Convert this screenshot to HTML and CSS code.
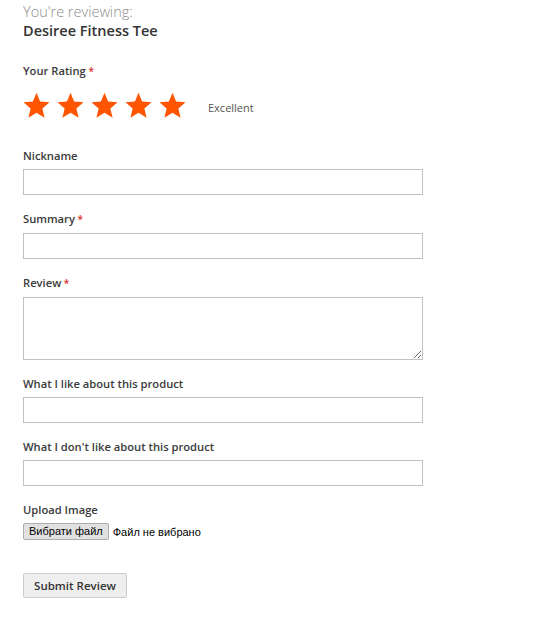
FILE: index.html
```html
<!DOCTYPE html>
<html>
<head>
<meta charset="utf-8">
<link rel="stylesheet" href="styles.css">
</head>
<body>
<form class="review-form">
  <div class="legend">
    <span class="legend-sub">You're reviewing:</span>
    <strong class="legend-name">Desiree Fitness Tee</strong>
  </div>

  <div class="field rating-field">
    <div class="label required">Your Rating</div>
    <div class="rating-row">
      <div class="stars">
        <svg class="star" viewBox="0 0 24 24"><polygon points="12,0.6 15.2,8.4 23.6,9.1 17.2,14.6 19.2,22.9 12,18.5 4.8,22.9 6.8,14.6 0.4,9.1 8.8,8.4"/></svg>
        <svg class="star" viewBox="0 0 24 24"><polygon points="12,0.6 15.2,8.4 23.6,9.1 17.2,14.6 19.2,22.9 12,18.5 4.8,22.9 6.8,14.6 0.4,9.1 8.8,8.4"/></svg>
        <svg class="star" viewBox="0 0 24 24"><polygon points="12,0.6 15.2,8.4 23.6,9.1 17.2,14.6 19.2,22.9 12,18.5 4.8,22.9 6.8,14.6 0.4,9.1 8.8,8.4"/></svg>
        <svg class="star" viewBox="0 0 24 24"><polygon points="12,0.6 15.2,8.4 23.6,9.1 17.2,14.6 19.2,22.9 12,18.5 4.8,22.9 6.8,14.6 0.4,9.1 8.8,8.4"/></svg>
        <svg class="star" viewBox="0 0 24 24"><polygon points="12,0.6 15.2,8.4 23.6,9.1 17.2,14.6 19.2,22.9 12,18.5 4.8,22.9 6.8,14.6 0.4,9.1 8.8,8.4"/></svg>
      </div>
      <span class="rating-text">Excellent</span>
    </div>
  </div>

  <div class="field">
    <label class="label">Nickname</label>
    <input class="input" type="text">
  </div>
  <div class="field">
    <label class="label required">Summary</label>
    <input class="input" type="text">
  </div>
  <div class="field">
    <label class="label required">Review</label>
    <textarea class="textarea"></textarea>
  </div>
  <div class="field">
    <label class="label">What I like about this product</label>
    <input class="input" type="text">
  </div>
  <div class="field">
    <label class="label">What I don't like about this product</label>
    <input class="input" type="text">
  </div>
  <div class="field upload-field">
    <label class="label">Upload Image</label>
    <div class="file-row">
      <span class="file-btn">Вибрати файл</span>
      <span class="file-status">Файл не вибрано</span>
    </div>
  </div>

  <div class="actions">
    <button type="button" class="submit">Submit Review</button>
  </div>
</form>
</body>
</html>
```
FILE: styles.css
```css
html, body {
  margin: 0;
  padding: 0;
  background: #fff;
}
body {
  font-family: "Open Sans", "Noto Sans", sans-serif;
  color: #333;
}
.review-form {
  padding: 3px 0 0 23px;
  width: 400px;
}
.legend {
  display: flex;
  flex-direction: column;
}
.legend-sub {
  font-weight: 300;
  font-size: 14.5px;
  line-height: 18px;
  color: #8c8c8c;
}
.legend-name {
  font-weight: 600;
  font-size: 14.5px;
  line-height: 19px;
  color: #333;
}
.label {
  display: block;
  font-weight: 600;
  font-size: 11.2px;
  line-height: 15px;
  color: #3a3a3a;
  margin-bottom: 6px;
}
.label.required::after {
  content: " *";
  color: #e02b27;
  font-size: 10px;
}
.field {
  margin-bottom: 16px;
}
.field.rating-field {
  margin-top: 23px;
  margin-bottom: 29px;
}
.rating-field .label {
  margin-bottom: 4px;
}
.rating-row {
  display: flex;
  align-items: center;
  margin-top: 13px;
}
.stars {
  display: flex;
  gap: 7px;
}
.star {
  width: 27px;
  height: 27px;
  fill: #ff5501;
  display: block;
}
.rating-text {
  margin-left: 22px;
  font-size: 11px;
  color: #555;
  line-height: 15px;
  padding-top: 3px;
}
.input {
  display: block;
  box-sizing: border-box;
  width: 400px;
  height: 26px;
  border: 1px solid #c2c2c2;
  margin: 0;
  padding: 0 8px;
  background: #fff;
}
.textarea {
  display: block;
  box-sizing: border-box;
  width: 400px;
  height: 63px;
  border: 1px solid #c2c2c2;
  margin: 0;
  padding: 4px 8px;
  resize: vertical;
}
.file-row {
  display: flex;
  align-items: center;
  gap: 4px;
  font-family: "Liberation Sans", Arial, sans-serif;
  font-size: 11px;
}
.file-btn {
  box-sizing: border-box;
  height: 17px;
  padding: 0 5px;
  line-height: 15px;
  border: 1px solid #adadad;
  border-radius: 2px;
  background: #e1e1e1;
  color: #000;
}
.file-status {
  color: #000;
}
.actions {
  margin-top: 33px;
}
.submit {
  box-sizing: border-box;
  width: 104px;
  height: 25px;
  border: 1px solid #cdcdcd;
  border-radius: 2px;
  background: #eee;
  color: #333;
  font-family: "Open Sans", "Noto Sans", sans-serif;
  font-weight: 600;
  font-size: 11.5px;
  padding: 0;
}
```
